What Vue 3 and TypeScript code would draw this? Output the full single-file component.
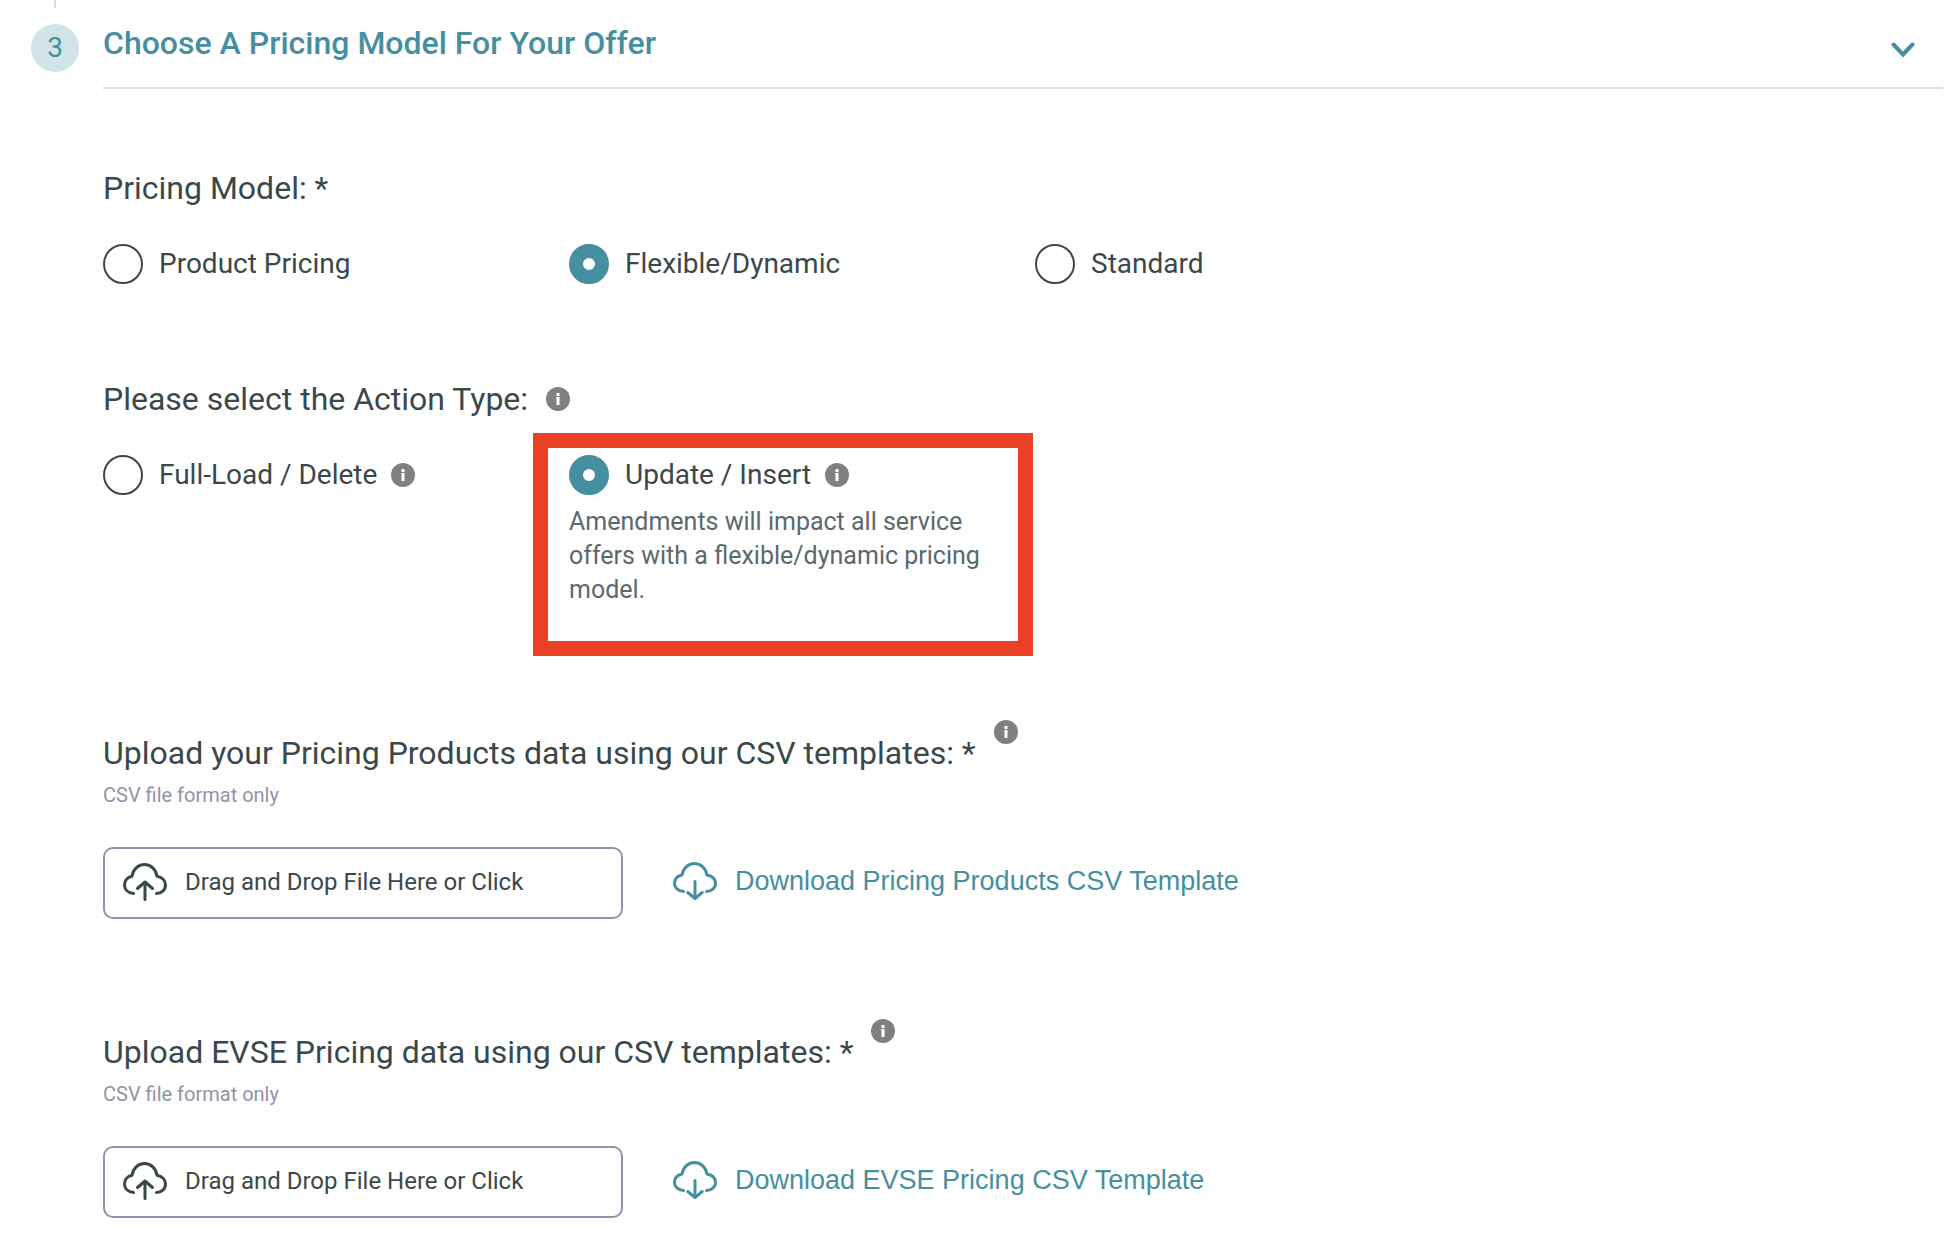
<script setup lang="ts">
import { ref } from 'vue'

interface UploadSection {
  id: string
  title: string
  link: string
}

const pricingModels = ['Product Pricing', 'Flexible/Dynamic', 'Standard']
const actionTypes = [
  { label: 'Full-Load / Delete', note: '' },
  {
    label: 'Update / Insert',
    note: 'Amendments will impact all service offers with a flexible/dynamic pricing model.',
  },
]
const uploads: UploadSection[] = [
  {
    id: 'products',
    title: 'Upload your Pricing Products data using our CSV templates: *',
    link: 'Download Pricing Products CSV Template',
  },
  {
    id: 'evse',
    title: 'Upload EVSE Pricing data using our CSV templates: *',
    link: 'Download EVSE Pricing CSV Template',
  },
]

const pricingModel = ref('Flexible/Dynamic')
const actionType = ref('Update / Insert')

function openPicker(id: string) {
  document.getElementById(`file-${id}`)?.click()
}
</script>

<template>
  <main class="step">
    <aside class="rail">
      <span class="rail-line"></span>
      <span class="step-number">3</span>
    </aside>

    <div class="body">
      <header class="step-header">
        <h1>Choose A Pricing Model For Your Offer</h1>
        <button class="toggle" type="button" aria-label="Collapse section">
          <svg width="24" height="16" viewBox="0 0 24 16" fill="none" stroke="currentColor" stroke-width="4" stroke-linecap="round">
            <path d="M2.5 2.5 12 12.5 21.5 2.5" />
          </svg>
        </button>
      </header>

      <section class="group models" role="radiogroup" aria-labelledby="model-title">
        <h2 id="model-title">Pricing Model: *</h2>
        <div class="options">
          <div v-for="model in pricingModels" :key="model" class="option">
            <label class="choice">
              <input v-model="pricingModel" type="radio" name="pricing-model" :value="model" />
              <span>{{ model }}</span>
            </label>
          </div>
        </div>
      </section>

      <section class="group actions" role="radiogroup" aria-labelledby="action-title">
        <div class="title-row">
          <h2 id="action-title">Please select the Action Type:</h2>
          <button class="info" type="button" aria-label="About action types">
            <svg width="24" height="24" viewBox="0 0 24 24">
              <circle cx="12" cy="12" r="12" fill="#808080" />
              <path d="M10.5 6h3v3h-3zM10 10h3.5v8h-3v-7.5H10z" fill="#fff" />
            </svg>
          </button>
        </div>
        <div class="options">
          <div v-for="action in actionTypes" :key="action.label" class="option">
            <div class="choice-row">
              <label class="choice">
                <input v-model="actionType" type="radio" name="action-type" :value="action.label" />
                <span>{{ action.label }}</span>
              </label>
              <button class="info" type="button" :aria-label="`About ${action.label}`">
                <svg width="24" height="24" viewBox="0 0 24 24">
                  <circle cx="12" cy="12" r="12" fill="#808080" />
                  <path d="M10.5 6h3v3h-3zM10 10h3.5v8h-3v-7.5H10z" fill="#fff" />
                </svg>
              </button>
            </div>
            <p v-if="action.note" class="note">{{ action.note }}</p>
            <span v-if="action.note" class="highlight"></span>
          </div>
        </div>
      </section>

      <section v-for="upload in uploads" :key="upload.id" class="upload">
        <div class="title-row raised">
          <h2>{{ upload.title }}</h2>
          <button class="info" type="button" :aria-label="`About ${upload.id} upload`">
            <svg width="24" height="24" viewBox="0 0 24 24">
              <circle cx="12" cy="12" r="12" fill="#808080" />
              <path d="M10.5 6h3v3h-3zM10 10h3.5v8h-3v-7.5H10z" fill="#fff" />
            </svg>
          </button>
        </div>
        <p class="hint">CSV file format only</p>
        <div class="upload-row">
          <button class="dropzone" type="button" @click="openPicker(upload.id)">
            <svg width="44" height="38" viewBox="0 0 44 38" fill="none" stroke="currentColor" stroke-width="3" stroke-linecap="round" stroke-linejoin="round">
              <path d="M10.5 30.5C5 30 1.5 26.5 1.5 22C1.5 17.5 4.5 14 9 13.2C10 6.5 15 1.5 21.5 1.5C28 1.5 33 6.5 34 13.2C39 14 42.5 17.5 42.5 22C42.5 27 38.5 30.5 33.5 30.5" />
              <path d="M22 36.5V19M14.5 25.5 22 19 29.5 25.5" />
            </svg>
            <span>Drag and Drop File Here or Click</span>
          </button>
          <input :id="`file-${upload.id}`" type="file" accept=".csv" :aria-label="upload.title" hidden />
          <a class="download" href="#">
            <svg width="44" height="38" viewBox="0 0 44 38" fill="none" stroke="currentColor" stroke-width="3" stroke-linecap="round" stroke-linejoin="round">
              <path d="M10.5 29.5C5 29 1.5 25.5 1.5 21.5C1.5 17 4.5 14 9 13C10 6.5 15 1.5 21.5 1.5C28 1.5 33 6.5 34 13C39 14 42.5 17 42.5 21.5C42.5 26 38.5 29.5 33.5 29.5" />
              <path d="M22 19.5V36M14.8 30.5 22 36.5 29.2 30.5" />
            </svg>
            <span>{{ upload.link }}</span>
          </a>
        </div>
      </section>
    </div>
  </main>
</template>

<style>
body {
  margin: 0;
  background: #fff;
}
</style>

<style scoped>
.step {
  display: flex;
  gap: 24px;
  padding: 0 9px 20px 31px;
  font-family: Roboto, 'Liberation Sans', sans-serif;
  color: #3b484b;
}

h1,
h2,
p {
  margin: 0;
}

button {
  padding: 0;
  border: 0;
  background: none;
  color: inherit;
  font: inherit;
  cursor: pointer;
}

svg {
  display: block;
  flex: none;
}

.rail {
  display: flex;
  flex-direction: column;
  align-items: center;
  gap: 16px;
  flex: none;
  width: 48px;
}

.rail-line {
  width: 2px;
  height: 8px;
  background: #dcdcdc;
}

.step-number {
  width: 48px;
  height: 48px;
  border-radius: 50%;
  background: #d1e4e7;
  color: #468fa0;
  font-size: 28px;
  line-height: 48px;
  text-align: center;
}

.body {
  flex: 1;
  min-width: 0;
}

.step-header {
  display: flex;
  justify-content: space-between;
  align-items: flex-start;
  padding: 23px 28px 24px 0;
  border-bottom: 2px solid #d1e4e7;
  color: #468fa0;
}

h1 {
  font-size: 32px;
  font-weight: 500;
  line-height: 40px;
}

.toggle {
  margin-top: 19px;
}

h2 {
  font-size: 32px;
  font-weight: 400;
  line-height: 40px;
}

.models {
  padding-top: 79px;
}

.actions {
  padding-top: 95px;
}

.options {
  display: flex;
  margin-top: 36px;
}

.option {
  position: relative;
  flex: none;
  width: 466px;
}

.choice-row {
  display: flex;
  align-items: center;
  gap: 14px;
}

.choice {
  display: flex;
  align-items: center;
  gap: 16px;
  font-size: 28px;
  line-height: 40px;
  cursor: pointer;
}

.choice input {
  appearance: none;
  box-sizing: border-box;
  width: 40px;
  height: 40px;
  margin: 0;
  border: 2px solid #3b484b;
  border-radius: 50%;
  background: #fff;
}

.choice input:checked {
  border: 14px solid #468fa0;
}

.title-row {
  display: flex;
  align-items: center;
  gap: 18px;
}

.raised {
  align-items: flex-start;
}

.raised h2 {
  padding-top: 13px;
}

.note {
  margin-top: 10px;
  padding-right: 40px;
  color: #5b696c;
  font-size: 25px;
  line-height: 34px;
}

.highlight {
  position: absolute;
  top: -22px;
  left: -36px;
  box-sizing: border-box;
  width: 500px;
  height: 223px;
  border: 15px solid #eb4026;
  pointer-events: none;
}

.upload {
  padding-top: 100px;
}

.actions + .upload {
  padding-top: 113px;
}

.hint {
  margin-top: 10px;
  color: #9292aa;
  font-size: 20px;
  line-height: 24px;
}

.upload-row {
  display: flex;
  align-items: center;
  gap: 50px;
  margin-top: 40px;
}

.dropzone {
  display: flex;
  align-items: center;
  gap: 18px;
  box-sizing: border-box;
  width: 520px;
  height: 72px;
  padding: 0 18px 2px;
  border: 2px solid #9292aa;
  border-radius: 10px;
  font-size: 24px;
  line-height: 32px;
}

.download {
  display: flex;
  align-items: center;
  gap: 18px;
  padding-bottom: 4px;
  color: #468fa0;
  font-family: 'Liberation Sans', Arial, sans-serif;
  font-size: 27px;
  line-height: 32px;
  text-decoration: none;
}
</style>
